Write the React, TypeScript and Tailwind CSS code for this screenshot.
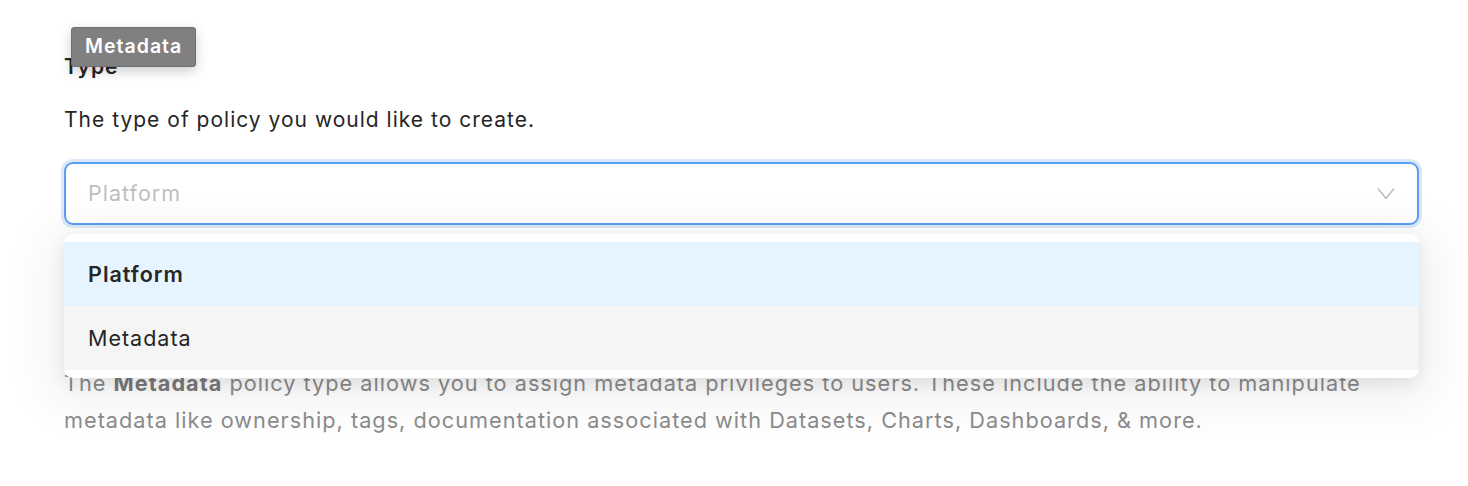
import React from 'react';

// Policy type select, shown with its option list open
const options = [
    { label: 'Platform', active: true },
    { label: 'Metadata', active: false },
];

const Chevron = () => (
    <svg width="18" height="13" viewBox="0 0 18 13" fill="none" className="shrink-0">
        <polyline points="1,1.5 9,11.5 17,1.5" stroke="#bfbfbf" strokeWidth="1.6" strokeLinejoin="round" />
    </svg>
);

export default function App() {
    return (
        <div
            className="relative w-[1468px] h-[486px] overflow-hidden bg-white pl-[64px] pr-[49px] pt-[52px] tracking-[0.063em]"
            style={{ fontFamily: 'Inter, "Open Sans", "Liberation Sans", sans-serif' }}
        >
            {/* Heading + help text */}
            <h2 className="text-[21px] leading-[30px] font-semibold text-[#262626]">Type</h2>
            <p className="mt-[23px] text-[21px] leading-[30px] text-[#262626]">
                The type of policy you would like to create.
            </p>

            {/* Select (focused) */}
            <div className="mt-[27px] h-[63px] flex items-center justify-between rounded-[9px] border-2 border-[#5a9ff5] ring-[3px] ring-[#dce9fb] bg-white pl-[22px] pr-[22px]">
                <span className="text-[21.5px] text-[#c0c0c0]">Platform</span>
                <Chevron />
            </div>

            {/* Description under the select */}
            <p className="mt-[140px] text-[21.7px] leading-[37px] text-[#8c8c8c]">
                The <span className="font-bold text-[#7a7a7a]">Metadata</span> policy type allows you to assign metadata privileges to users. These include the ability to manipulate
                <br />
                metadata like ownership, tags, documentation associated with Datasets, Charts, Dashboards, &amp; more.
            </p>

            {/* Open dropdown list */}
            <div className="absolute left-[64px] top-[234px] w-[1355px] rounded-[9px] bg-white py-[8px] shadow-[0_6px_16px_rgba(0,0,0,0.08),0_10px_50px_16px_rgba(0,0,0,0.06)]">
                {options.map(o => (
                    <div
                        key={o.label}
                        className={
                            o.active
                                ? 'h-[64px] flex items-center px-[24px] bg-[#e6f4ff] text-[21.5px] font-semibold text-[#262626]'
                                : 'h-[64px] flex items-center px-[24px] bg-[#f5f5f5] text-[21.5px] text-[#262626]'
                        }
                    >
                        {o.label}
                    </div>
                ))}
            </div>

            {/* Tooltip */}
            <div className="absolute left-[71px] top-[27px] h-[40px] px-[13px] flex items-center rounded-[3px] bg-[#808080] border border-[#6f6f6f] shadow-[0_4px_12px_rgba(0,0,0,0.2)] text-[19.5px] font-semibold text-white">
                Metadata
            </div>
        </div>
    );
}
